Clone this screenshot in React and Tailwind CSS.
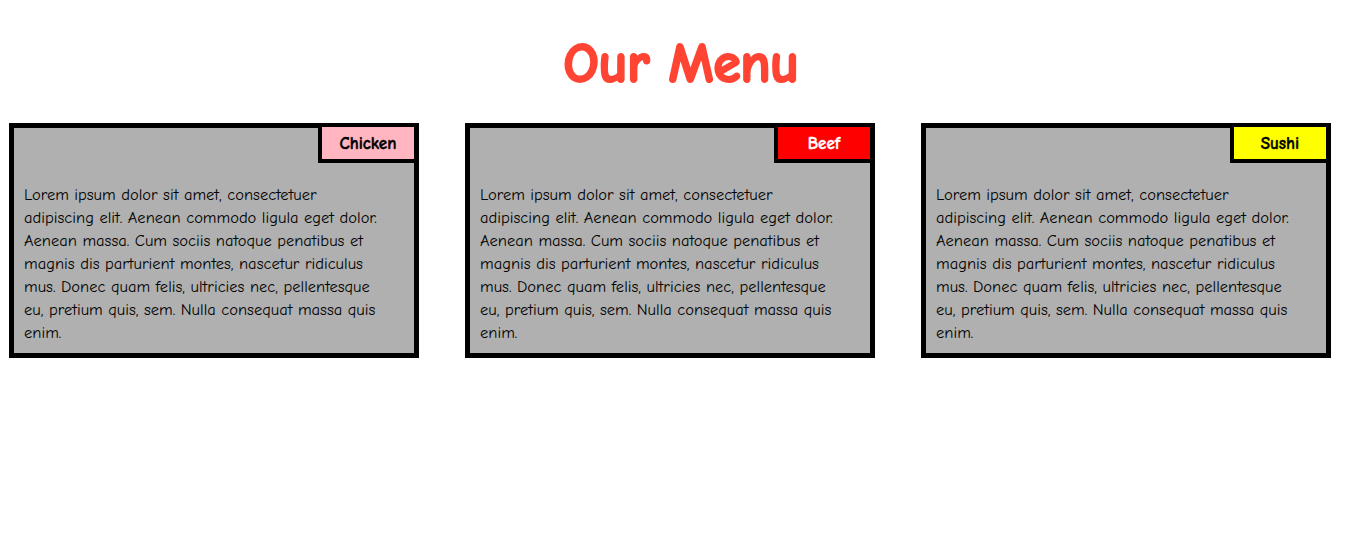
import React from "react";

const LINES = [
  "Lorem ipsum dolor sit amet, consectetuer",
  "adipiscing elit. Aenean commodo ligula eget dolor.",
  "Aenean massa. Cum sociis natoque penatibus et",
  "magnis dis parturient montes, nascetur ridiculus",
  "mus. Donec quam felis, ultricies nec, pellentesque",
  "eu, pretium quis, sem. Nulla consequat massa quis",
  "enim.",
];

const FONT = { fontFamily: '"Comic Sans MS", "Comic Neue", Lato, "Open Sans", sans-serif' };

function Card({ label, badgeClass }) {
  return (
    <div className="relative w-[410px] h-[235px] border-[5px] border-black bg-[#b0b0b0] pt-[55px] px-[10px]">
      <div
        className={`absolute top-[-1px] right-0 w-[96px] h-[36px] border-l-4 border-b-4 border-black flex items-center justify-center pt-[2px] text-[17px] font-bold [-webkit-text-stroke:0.4px_currentColor] ${badgeClass}`}
      >
        {label}
      </div>
      <p className="text-[16.5px] leading-[23px] text-black">
        {LINES.map((l, i) => (
          <span key={i} className="block whitespace-nowrap">
            {l}
          </span>
        ))}
      </p>
    </div>
  );
}

export default function App() {
  return (
    <div className="w-[1346px] h-[560px] bg-white" style={FONT}>
      <h1 className="h-[123px] pt-[29px] pl-[16px] text-center text-[56px] leading-[70px] font-bold tracking-[-0.5px] text-[#ff4433] [-webkit-text-stroke:2px_#ff4433]">
        Our Menu
      </h1>
      <div className="flex gap-[46px] pl-[9px]">
        <Card label="Chicken" badgeClass="bg-[#ffb6c1] text-black" />
        <Card label="Beef" badgeClass="bg-[#ff0000] text-white" />
        <Card label="Sushi" badgeClass="bg-[#ffff00] text-black" />
      </div>
    </div>
  );
}
